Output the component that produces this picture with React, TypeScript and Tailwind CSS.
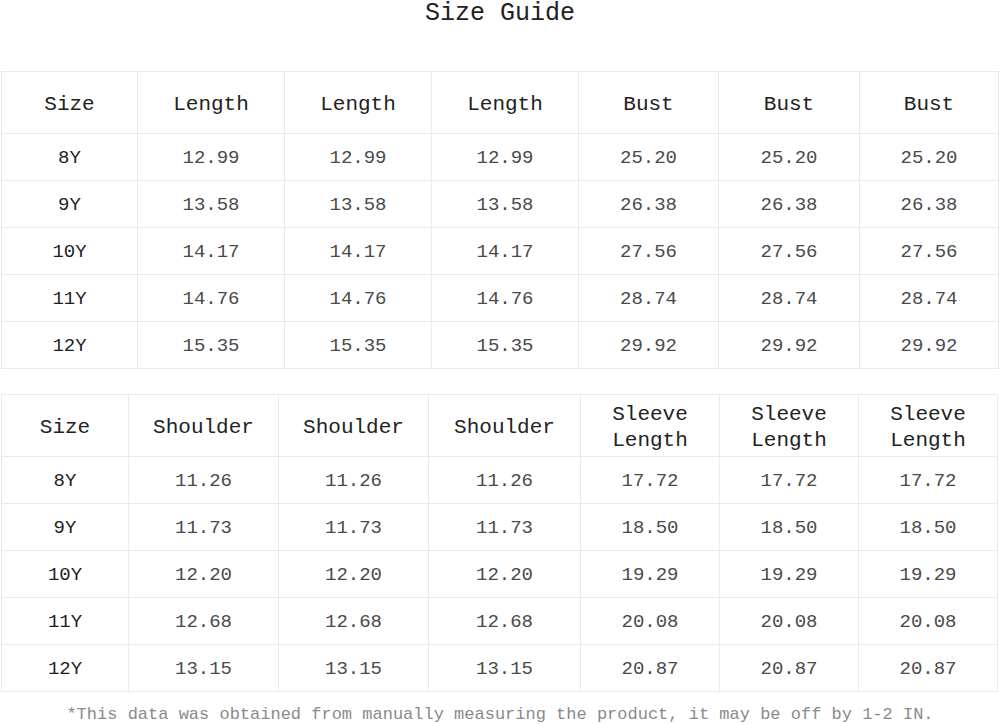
const top = {
  widths: [136, 147, 147, 147, 140, 141, 139],
  head: ["Size", "Length", "Length", "Length", "Bust", "Bust", "Bust"],
  rows: [
    ["8Y", "12.99", "25.20"],
    ["9Y", "13.58", "26.38"],
    ["10Y", "14.17", "27.56"],
    ["11Y", "14.76", "28.74"],
    ["12Y", "15.35", "29.92"],
  ],
};

const bottom = {
  widths: [127, 150, 150, 152, 139, 139, 139],
  head: ["Size", "Shoulder", "Shoulder", "Shoulder", "Sleeve\nLength", "Sleeve\nLength", "Sleeve\nLength"],
  rows: [
    ["8Y", "11.26", "17.72"],
    ["9Y", "11.73", "18.50"],
    ["10Y", "12.20", "19.29"],
    ["11Y", "12.68", "20.08"],
    ["12Y", "13.15", "20.87"],
  ],
};

type Table = typeof top;

// one size table: header row + five rows, a/b values repeated three times
const SizeTable = ({ data }: { data: Table }) => {
  return (
    <table className="ml-px table-fixed border-collapse w-[997px]">
      <colgroup>
        {data.widths.map((w, i) => (
          <col key={i} style={{ width: w }} />
        ))}
      </colgroup>
      <thead>
        <tr className="h-[62px]">
          {data.head.map((h, i) => (
            <th
              key={i}
              className="border border-[#ebebeb] pt-1 font-normal text-[21px] leading-[26px] text-[#222] whitespace-pre-line"
            >
              {h}
            </th>
          ))}
        </tr>
      </thead>
      <tbody>
        {data.rows.map(([size, a, b]) => (
          <tr key={size} className="h-[47px]">
            <td className="border border-[#ebebeb] pt-0.5 text-center text-[19px] text-[#1e1e1e]">{size}</td>
            {[a, a, a, b, b, b].map((v, i) => (
              <td key={i} className="border border-[#ebebeb] pt-0.5 text-center text-[19px] text-[#4a4a4a]">
                {v}
              </td>
            ))}
          </tr>
        ))}
      </tbody>
    </table>
  );
};

export default function App() {
  return (
    <div className="w-[1000px] h-[724px] bg-white font-['Liberation_Mono',monospace] overflow-hidden">
      {/* Title */}
      <h1 className="text-center text-[25px] leading-[26px] text-[#222] pt-px">Size Guide</h1>

      <div className="mt-[44px]">
        <SizeTable data={top} />
      </div>

      <div className="mt-[25px]">
        <SizeTable data={bottom} />
      </div>

      {/* Note */}
      <p className="text-center text-[17px] leading-[20px] text-[#8a8a8a] mt-[13px]">
        *This data was obtained from manually measuring the product, it may be off by 1-2 IN.
      </p>
    </div>
  );
}
